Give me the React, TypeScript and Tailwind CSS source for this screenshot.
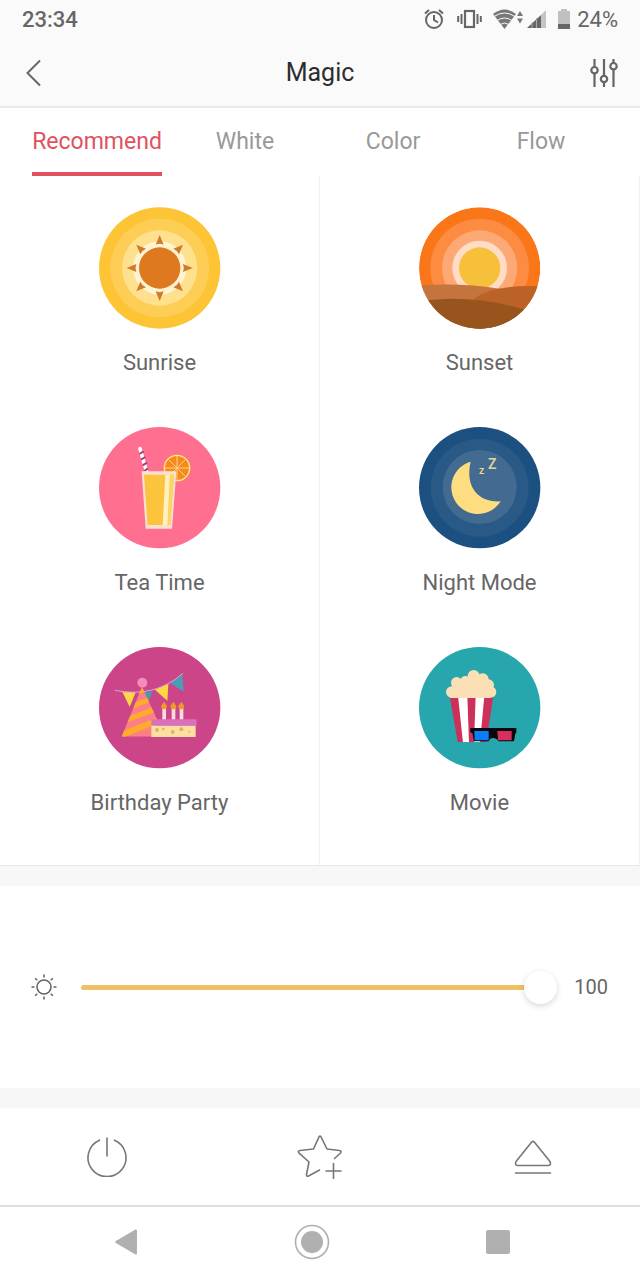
import React, { useState } from 'react'

const SunriseArt = () => (
  <svg viewBox="26 20 366 366" className="size-[122px]" aria-hidden="true">
    <circle cx="208" cy="203" r="182" fill="#fdc435" />
    <circle cx="208" cy="203" r="148" fill="#fecd55" />
    <circle cx="208" cy="203" r="113" fill="#fee08d" />
    <circle cx="208" cy="203" r="80" fill="#fff3d2" />
    <circle cx="208" cy="203" r="62" fill="#de791f" />
    {[0, 45, 90, 135, 180, 225, 270, 315].map((angle) => (
      <path key={angle} d="M208 104l12 29q-12-5-24 0z" fill="#cf7a2c" transform={`rotate(${angle} 208 203)`} />
    ))}
  </svg>
)

const SunsetArt = () => (
  <svg viewBox="26 20 366 366" className="size-[122px]" aria-hidden="true">
    <clipPath id="sunset">
      <circle cx="208" cy="203" r="182" />
    </clipPath>
    <g clipPath="url(#sunset)">
      <circle cx="208" cy="203" r="182" fill="#fb7619" />
      <circle cx="208" cy="203" r="148" fill="#fd8b41" />
      <circle cx="208" cy="203" r="113" fill="#fda975" />
      <circle cx="208" cy="203" r="82" fill="#fedcc6" />
      <circle cx="208" cy="203" r="62" fill="#f6c03b" />
      <path d="M20 256q130-10 252 10l60 60-110 60H20z" fill="#c4743d" />
      <path d="M190 296q60-44 202-38v130H190z" fill="#bb6228" />
      <path d="M20 304q160-26 330 26l-60 70H20z" fill="#98541d" />
    </g>
  </svg>
)

const TeaArt = () => (
  <svg viewBox="26 25 366 366" className="size-[122px]" aria-hidden="true">
    <circle cx="208" cy="207" r="182" fill="#ff6f8f" />
    <circle cx="260" cy="148" r="41" fill="#f78a1d" />
    <circle cx="260" cy="148" r="38" fill="none" stroke="#fde3a0" strokeWidth="4" />
    <path d="M260 112v72M224 148h72M235 123l50 50M285 123l-50 50" stroke="#fdd08a" strokeWidth="3" />
    <path d="M149 90l20 70" stroke="#fff" strokeWidth="11" strokeLinecap="round" />
    <path d="M147 106l13-8M152 123l13-8M157 140l13-8M162 157l11-8" stroke="#a3407a" strokeWidth="6" />
    <path d="M154 158h104l-13 172h-79z" fill="#fde1cf" />
    <path d="M161 168h90l-11 151h-68z" fill="#fcc33c" />
    <path d="M225 168h14l-7 151h-15z" fill="#fff0c0" />
    <path d="M239 168h12l-11 151h-8z" fill="#fbd568" />
  </svg>
)

const NightArt = () => (
  <svg viewBox="26 26 366 366" className="size-[122px]" aria-hidden="true">
    <circle cx="208" cy="208" r="182" fill="#1c5080" />
    <circle cx="208" cy="208" r="147" fill="#295986" />
    <circle cx="208" cy="206" r="111" fill="#436b91" />
    <path d="M181 130A80 80 0 1 0 271 249C205 253 163 207 181 130z" fill="#fedd80" />
    <text x="206" y="167" fontSize="31" fontWeight="500" fill="#f3dc92">z</text>
    <text x="233" y="151" fontSize="42" fontWeight="500" fill="#e2d89c">Z</text>
  </svg>
)

const PartyArt = () => (
  <svg viewBox="26 24 366 366" className="size-[122px]" aria-hidden="true">
    <clipPath id="hat">
      <path d="M155 143l-61 150h108v-48z" />
    </clipPath>
    <circle cx="208" cy="206" r="182" fill="#cb4588" />
    <path d="M96 158l40 2-18 44z" fill="#ffd744" />
    <path d="M157 160l30-3-12 28z" fill="#4799ae" />
    <path d="M194 152l40-18-3 51z" fill="#ffd744" />
    <path d="M240 132l36-26 4 52z" fill="#489fb5" />
    <path d="M74 154q118 24 204-51" fill="none" stroke="#dba6d5" strokeWidth="3" />
    <g clipPath="url(#hat)">
      <path d="M90 140h112v154H90z" fill="#fb7f86" />
      <path d="M138 155l42-16v14l-42 16zM120 196l66-26v16l-76 30zM105 236l92-36v18L95 256zM88 280l110-44v20L88 300z" fill="#ffac2b" />
    </g>
    <circle cx="156" cy="131" r="15" fill="#f68ab8" />
    <path d="M216 206h11v36h-11zM244 206h11v36h-11zM268 206h11v36h-11z" fill="#fce0dc" />
    <path d="M221 188l9 13q-1 10-9 10t-9-10zM249 188l9 13q-1 10-9 10t-9-10zM273 188l9 13q-1 10-9 10t-9-10z" fill="#f29924" />
    <path d="M183 241h136v19H183z" fill="#d870bb" />
    <path d="M183 260h133v34H183z" fill="#fedf9f" />
    <g fill="#d4b777">
      <circle cx="200" cy="273" r="6" />
      <circle cx="219" cy="270" r="4" />
      <circle cx="247" cy="279" r="6" />
      <circle cx="273" cy="271" r="6" />
      <circle cx="297" cy="278" r="3" />
    </g>
  </svg>
)

const MovieArt = () => (
  <svg viewBox="26 24 366 366" className="size-[122px]" aria-hidden="true">
    <clipPath id="bucket">
      <path d="M118 172h131l-21 138h-86z" />
    </clipPath>
    <circle cx="208" cy="206" r="182" fill="#28a6ad" />
    <g clipPath="url(#bucket)">
      <path d="M110 170h145v142H110z" fill="#cc315b" />
      <path d="M143 170h28l5 142h-18zM196 170h26l-13 142h-18z" fill="#fff" />
    </g>
    <g fill="#fce0b5">
      <circle cx="124" cy="159" r="17" />
      <circle cx="139" cy="131" r="17" />
      <circle cx="165" cy="126" r="15" />
      <circle cx="190" cy="111" r="18" />
      <circle cx="217" cy="121" r="18" />
      <circle cx="234" cy="138" r="17" />
      <circle cx="241" cy="159" r="17" />
      <path d="M139 122l51-6 27 6 24 30v25H119v-25z" />
    </g>
    <path d="M180 267h138v14l-3 3-4 23h-46q-7-10-17-10-8 0-13 10h-44l-5-25-6-2z" fill="#08080c" />
    <path d="M192 276h43v28h-42z" fill="#0a7ffa" />
    <path d="M261 276h43v28h-41z" fill="#d6315d" />
  </svg>
)

const scenes = [
  { name: 'Sunrise', Art: SunriseArt },
  { name: 'Sunset', Art: SunsetArt },
  { name: 'Tea Time', Art: TeaArt },
  { name: 'Night Mode', Art: NightArt },
  { name: 'Birthday Party', Art: PartyArt },
  { name: 'Movie', Art: MovieArt },
]

const tabs = ['Recommend', 'White', 'Color', 'Flow']

const StatusBar = () => (
  <div className="flex h-[38px] items-center bg-[#fafafa] px-[22px] text-[22px] text-[#666]">
    <span className="font-medium">23:34</span>
    <div className="ml-auto flex items-center">
      <svg width="20" height="20" viewBox="0 0 20 20" fill="none" stroke="#666" strokeWidth="2" aria-hidden="true">
        <circle cx="10" cy="11" r="8" />
        <path d="M10 6v5l4 2.500M1 4.500l4-3.500M19 4.500l-4-3.500" />
      </svg>
      <svg className="ml-[13px]" width="25" height="20" viewBox="0 0 25 20" fill="none" stroke="#666" strokeWidth="2" aria-hidden="true">
        <rect x="8" y="2" width="9" height="16" strokeWidth="2.200" />
        <path d="M4.500 5v10M1.200 7v6M20.500 5v10M23.800 7v6" />
      </svg>
      <svg className="ml-[11px]" width="30" height="20" viewBox="0 0 30 20" aria-hidden="true">
        <path d="M0 5q11.500-9 23 0L11.500 20z" fill="#777" />
        <path d="M1 7.500q10.500-7 21 0M4 11.500q7.500-5 15 0M7 15.500q4.500-3 9 0" fill="none" stroke="#fafafa" strokeWidth="1" />
        <path d="M24 7l3-5 3 5zM24 9.500l3 5 3-5z" fill="#777" />
      </svg>
      <svg className="ml-1" width="20" height="20" viewBox="0 0 20 20" aria-hidden="true">
        <path d="M19 1v18H14V6z" fill="#c4c4c4" />
        <path d="M14 6v13H0z" fill="#666" />
        <path d="M5 13v6M9.500 9v10" stroke="#aaa" strokeWidth="1" />
      </svg>
      <svg className="ml-[11px]" width="12" height="20" viewBox="0 0 12 20" aria-hidden="true">
        <path d="M3 0h6v2h3v13H0V2h3z" fill="#c0c0c0" />
        <path d="M0 15h12v5H0z" fill="#666" />
      </svg>
      <span className="ml-[7px]">24%</span>
    </div>
  </div>
)

const App: React.FC = () => {
  const [activeTab, setActiveTab] = useState('Recommend')
  const [brightness, setBrightness] = useState(100)

  return (
    <div className="flex min-h-screen flex-col bg-white font-['Roboto',sans-serif] text-[#666]">
      <StatusBar />
      <header className="flex h-[70px] items-center justify-between border-b-2 border-[#eaeaea] bg-[#fafafa] px-[18px] pt-[2px]">
        <button aria-label="Back" className="flex w-8 justify-center">
          <svg width="16" height="28" viewBox="0 0 16 28" fill="none" stroke="#666" strokeWidth="2" aria-hidden="true">
            <path d="M14 1.500L1.500 14 14 26.500" />
          </svg>
        </button>
        <h1 className="text-[25px] text-[#2d2d2d]">Magic</h1>
        <button aria-label="Settings" className="flex w-8 justify-start">
          <svg width="28" height="28" viewBox="0 0 28 28" fill="none" stroke="#666" strokeWidth="2.200" aria-hidden="true">
            <path d="M4.500 0v8M4.500 14.500V28M14 0v17M14 23v5M23.500 0v4M23.500 10.500V28" />
            <circle cx="4.500" cy="11.200" r="3.200" />
            <circle cx="14" cy="20" r="3.200" />
            <circle cx="23.500" cy="7.200" r="3.200" />
          </svg>
        </button>
      </header>

      <nav className="grid h-[68px] grid-cols-4 justify-items-center pl-[23px] pr-[25px] text-[23px]">
        {tabs.map((tab) => (
          <button
            key={tab}
            onClick={() => setActiveTab(tab)}
            className={
              tab === activeTab
                ? 'border-b-4 border-[#e0525f] pt-1 text-[#e0525f]'
                : 'border-b-4 border-transparent pt-1 text-[#999]'
            }
          >
            {tab}
          </button>
        ))}
      </nav>

      <main className="grid grid-cols-2 border-b border-[#e8e8e8]">
        {scenes.map(({ name, Art }) => (
          <button
            key={name}
            className="flex flex-col items-center border-r border-[#f0f0f0] pb-[19px] pt-[31px] nth-last-[-n+2]:pb-12"
          >
            <Art />
            <span className="mt-5 text-[22px] leading-7">{name}</span>
          </button>
        ))}
      </main>

      <section className="flex items-center border-y-[20px] border-[#f7f7f7] py-[84px] pl-[31px] pr-8">
        <svg width="26" height="26" viewBox="0 0 26 26" fill="none" stroke="#666" strokeWidth="1.600" aria-hidden="true">
          <circle cx="13" cy="13" r="7" />
          <path d="M13 .5v3M13 22.500v3M.5 13h3M22.500 13h3M4.200 4.200l2 2M19.800 19.800l2 2M21.800 4.200l-2 2M6.200 19.800l-2 2" />
        </svg>
        <input
          type="range"
          aria-label="Brightness"
          min={1}
          max={100}
          value={brightness}
          onChange={(e) => setBrightness(Number(e.target.value))}
          style={{ background: `linear-gradient(to right, #edc264 ${brightness}%, #e5e5e5 ${brightness}%)` }}
          className="ml-6 h-[5px] min-w-0 flex-1 appearance-none rounded-full [&::-webkit-slider-thumb]:size-[33px] [&::-webkit-slider-thumb]:appearance-none [&::-webkit-slider-thumb]:rounded-full [&::-webkit-slider-thumb]:bg-white [&::-webkit-slider-thumb]:shadow-[0_2px_6px_rgba(0,0,0,0.16)]"
        />
        <output className="w-[51px] text-right text-xl leading-[34px]">{brightness}</output>
      </section>

      <div className="grid h-[97px] grid-cols-3 items-center justify-items-center">
        <button aria-label="Power">
          <svg width="40" height="40" viewBox="0 0 40 40" fill="none" stroke="#777" strokeWidth="1.600" strokeLinecap="round" aria-hidden="true">
            <path d="M12.500 3.200A19 19 0 1 0 27.500 3.200M20 1v18" />
          </svg>
        </button>
        <button aria-label="Add to favorites">
          <svg width="46" height="44" viewBox="0 0 46 44" fill="none" stroke="#777" strokeWidth="1.600" strokeLinecap="round" strokeLinejoin="round" aria-hidden="true">
            <path d="M22.500 35L11.500 41Q9.500 42 9.500 39.500L12 27 1.800 17.800Q.5 16 3 15.500L16.500 14 22 1.800Q23 .5 24 1.800L30 14l12.500 1.500Q45 16 43.500 18L37.500 23.500" />
            <path d="M36.500 28.500v15M29 36h15" />
          </svg>
        </button>
        <button aria-label="Expand">
          <svg width="38" height="34" viewBox="0 0 38 34" fill="none" stroke="#777" strokeWidth="1.600" strokeLinecap="round" strokeLinejoin="round" aria-hidden="true">
            <path d="M17.500 2.200Q19 .5 20.500 2.200L36 21.500Q37.500 25 34.500 25.500H3.500Q.5 25 2 21.500zM1.500 33h35" />
          </svg>
        </button>
      </div>

      <footer className="grid h-[75px] grid-cols-3 items-center justify-items-center border-t-2 border-[#dedede] pb-1 pl-[33px] pr-[49px]">
        <button aria-label="System back">
          <svg width="22" height="26" viewBox="0 0 22 26" fill="#b0b0b0" aria-hidden="true">
            <path d="M20.500 .5q1.500-.5 1.500 1.500v22q0 2-1.500 1.500L.8 14Q-.5 13 .8 12z" />
          </svg>
        </button>
        <button aria-label="Home">
          <svg width="36" height="36" viewBox="0 0 36 36" aria-hidden="true">
            <circle cx="18" cy="18" r="16.500" fill="none" stroke="#b0b0b0" strokeWidth="1.600" />
            <circle cx="18" cy="18" r="11" fill="#b0b0b0" />
          </svg>
        </button>
        <button aria-label="Recent apps">
          <span className="block size-6 rounded-xs bg-[#b0b0b0]" />
        </button>
      </footer>
    </div>
  )
}

export default App
